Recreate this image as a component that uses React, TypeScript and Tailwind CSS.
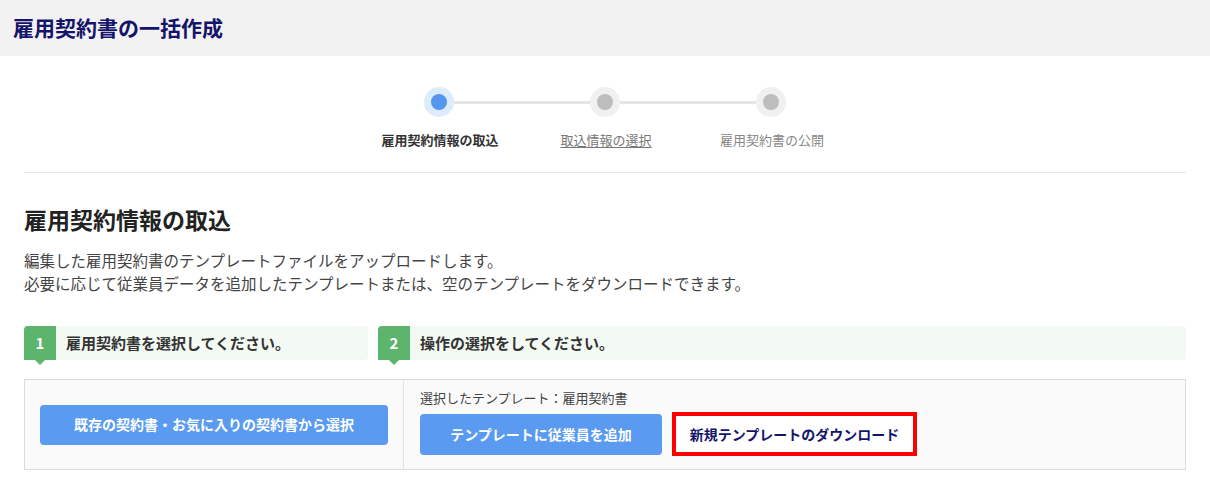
import React from 'react';

const font = { fontFamily: '"Noto Sans CJK JP", "Noto Sans", sans-serif' };

const steps = [
  { label: '雇用契約情報の取込', state: 'active' },
  { label: '取込情報の選択', state: 'link' },
  { label: '雇用契約書の公開', state: 'todo' },
];

const StepDot: React.FC<{ active?: boolean }> = ({ active }) => (
  <div
    className={`flex items-center justify-center w-[30px] h-[30px] rounded-full shrink-0 ${
      active ? 'bg-[#ddecfc]' : 'bg-[#f0f0f0]'
    }`}
  >
    <div className={`w-[16px] h-[16px] rounded-full ${active ? 'bg-[#5596ef]' : 'bg-[#bdbdbd]'}`} />
  </div>
);

const SectionLabel: React.FC<{ num: string; text: string; className?: string }> = ({ num, text, className }) => (
  <div className={`flex items-stretch h-[34px] bg-[#f3f9f3] rounded-r-[4px] ${className ?? ''}`}>
    <div className="relative w-[32px] bg-[#5db46c] rounded-tl-[4px] flex items-center justify-center text-white font-bold text-[15px]">
      {num}
      <div className="absolute left-1/2 -translate-x-1/2 top-full w-0 h-0 border-l-[5px] border-r-[5px] border-t-[5px] border-l-transparent border-r-transparent border-t-[#5db46c]" />
    </div>
    <div className="flex items-center pl-[10px] text-[15px] font-bold text-[#333]">{text}</div>
  </div>
);

export default function App() {
  return (
    <div className="w-[1210px] h-[479px] bg-white overflow-hidden" style={font}>
      {/* header */}
      <div className="h-[56px] bg-[#f2f2f2] flex items-center pl-[13px]">
        <h1 className="text-[21px] font-bold text-[#14146b]">雇用契約書の一括作成</h1>
      </div>

      <div className="px-[24px]">
        {/* stepper */}
        <div className="pt-[31px] pb-[22px] border-b border-[#e6e6e6]">
          <div className="flex items-center justify-center">
            <StepDot active />
            <div className="w-[136px] h-[3px] bg-[#e5e5e5]" />
            <StepDot />
            <div className="w-[136px] h-[3px] bg-[#e5e5e5]" />
            <StepDot />
          </div>
          <div className="flex justify-center mt-[13px] ml-[2px]">
            {steps.map((s) => (
              <div key={s.label} className="w-[166px] flex justify-center">
                <span
                  className={`text-[13px] leading-[20px] ${
                    s.state === 'active'
                      ? 'font-bold text-[#333]'
                      : s.state === 'link'
                      ? 'text-[#777] underline underline-offset-2'
                      : 'text-[#888]'
                  }`}
                >
                  {s.label}
                </span>
              </div>
            ))}
          </div>
        </div>

        {/* section */}
        <h2 className="mt-[31px] text-[23px] font-bold text-[#222] leading-[30px]">雇用契約情報の取込</h2>
        <div className="mt-[15px] text-[15.5px] leading-[23px] text-[#444]">
          <p>編集した雇用契約書のテンプレートファイルをアップロードします。</p>
          <p>必要に応じて従業員データを追加したテンプレートまたは、空のテンプレートをダウンロードできます。</p>
        </div>

        <div className="mt-[31px] flex gap-[10px]">
          <SectionLabel num="1" text="雇用契約書を選択してください。" className="w-[344px]" />
          <SectionLabel num="2" text="操作の選択をしてください。" className="flex-1" />
        </div>

        <div className="mt-[19px] h-[91px] flex bg-[#fafafa] border border-[#dcdcdc]">
          <div className="w-[379px] border-r border-[#e2e2e2] flex items-center px-[15px]">
            <button className="w-full h-[40px] rounded-[4px] bg-[#5a9af0] text-white font-bold text-[14px]">
              既存の契約書・お気に入りの契約書から選択
            </button>
          </div>
          <div className="flex-1 pl-[16px] pt-[9px]">
            <div className="text-[13px] leading-[18px] text-[#444]">選択したテンプレート：雇用契約書</div>
            <div className="mt-[5px] flex items-center gap-[10px]">
              <button className="w-[242px] h-[41px] rounded-[4px] bg-[#5a9af0] text-white font-bold text-[14px]">
                テンプレートに従業員を追加
              </button>
              <button className="w-[245px] h-[44px] bg-white border-4 border-[#ff0000] text-[#14146b] font-bold text-[14px]">
                新規テンプレートのダウンロード
              </button>
            </div>
          </div>
        </div>
      </div>
    </div>
  );
}
